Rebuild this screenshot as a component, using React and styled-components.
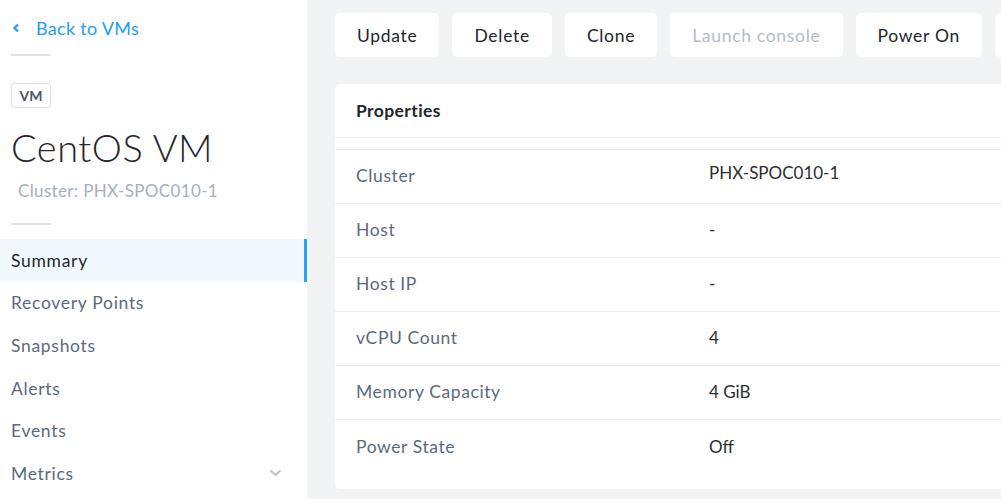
import styled, { createGlobalStyle } from "styled-components";

const GlobalStyle = createGlobalStyle`
  html, body {
    margin: 0;
    padding: 0;
    background: #f2f3f5;
  }
  * {
    box-sizing: border-box;
  }
`;

const actions = [
  { label: "Update" },
  { label: "Delete" },
  { label: "Clone" },
  { label: "Launch console", disabled: true },
  { label: "Power On" },
  { label: "Power Off" },
];

const properties = [
  { name: "Cluster", value: "PHX-SPOC010-1", raised: true },
  { name: "Host", value: "-" },
  { name: "Host IP", value: "-" },
  { name: "vCPU Count", value: "4" },
  { name: "Memory Capacity", value: "4 GiB" },
  { name: "Power State", value: "Off" },
];

const navItems = [
  { label: "Summary", active: true },
  { label: "Recovery Points" },
  { label: "Snapshots" },
  { label: "Alerts" },
  { label: "Events" },
  { label: "Metrics", expandable: true },
];

export default function App() {
  return (
    <>
      <GlobalStyle />
      <Page>
        <Sidebar>
          <BackLink>
            <svg width="9" height="10" viewBox="0 0 9 10">
              <polyline
                points="6,1.5 2.5,5 6,8.5"
                fill="none"
                stroke="#22a0f0"
                strokeWidth="2.4"
              />
            </svg>
            <span>Back to VMs</span>
          </BackLink>
          <ShortRule />
          <Badge>VM</Badge>
          <Title>CentOS VM</Title>
          <Subtitle>Cluster: PHX-SPOC010-1</Subtitle>
          <ShortRule $gap="22px" />
          <Nav>
            {navItems.map((item) => (
              <NavItem key={item.label} $active={item.active}>
                <span>{item.label}</span>
                {item.expandable && (
                  <svg width="13" height="8" viewBox="0 0 13 8">
                    <polyline
                      points="1.5,1.5 6.5,6 11.5,1.5"
                      fill="none"
                      stroke="#b8c1cd"
                      strokeWidth="2"
                    />
                  </svg>
                )}
              </NavItem>
            ))}
          </Nav>
        </Sidebar>

        <Main>
          <Toolbar>
            {actions.map((action) => (
              <ActionButton key={action.label} $disabled={action.disabled}>
                {action.label}
              </ActionButton>
            ))}
          </Toolbar>

          <Card>
            <CardHeader>Properties</CardHeader>
            <HeadSpacer />
            {properties.map((prop) => (
              <Row key={prop.name}>
                <Label>{prop.name}</Label>
                <Value $raised={prop.raised}>{prop.value}</Value>
              </Row>
            ))}
          </Card>
        </Main>
      </Page>
    </>
  );
}

const Page = styled.div`
  display: flex;
  height: 100vh;
  overflow: hidden;
  font-family: Lato, "Open Sans", sans-serif;
`;

const Sidebar = styled.aside`
  width: 307px;
  flex-shrink: 0;
  background: #ffffff;
  display: flex;
  flex-direction: column;
  align-items: flex-start;
`;

const BackLink = styled.a`
  display: flex;
  align-items: center;
  gap: 15px;
  height: 22px;
  margin: 17px 0 0 12px;
  color: #22a0f0;
  font-size: 18px;
  letter-spacing: 0.3px;
  cursor: pointer;
`;

const ShortRule = styled.div`
  flex-shrink: 0;
  width: 40px;
  height: 2px;
  background: #dfe3e8;
  margin: ${(p) => p.$gap || "15px"} 0 0 11px;
`;

const Badge = styled.span`
  flex-shrink: 0;
  margin: 27px 0 0 11px;
  height: 25px;
  width: 40px;
  display: flex;
  align-items: center;
  justify-content: center;
  border: 1px solid #dde1e7;
  border-radius: 3px;
  color: #4d5869;
  font-size: 14px;
  line-height: 14px;
  font-weight: 700;
`;

const Title = styled.h1`
  margin: 17px 0 0 11px;
  font-size: 38px;
  line-height: 44px;
  font-weight: 300;
  letter-spacing: 0.5px;
  color: #23272c;
`;

const Subtitle = styled.div`
  margin: 12px 0 0 18px;
  font-size: 17px;
  line-height: 20px;
  letter-spacing: 0.35px;
  color: #a5b0c0;
`;

const Nav = styled.nav`
  margin-top: 14px;
  width: 100%;
  display: flex;
  flex-direction: column;
`;

const NavItem = styled.div`
  height: 42.6px;
  padding: 0 25px 0 11px;
  display: flex;
  align-items: center;
  justify-content: space-between;
  font-size: 17.5px;
  letter-spacing: 0.7px;
  color: ${(p) => (p.$active ? "#22272d" : "#5b6a7e")};
  background: ${(p) => (p.$active ? "#f2f9fe" : "transparent")};
  box-shadow: ${(p) => (p.$active ? "inset -3px 0 0 #22a5f7" : "none")};
`;

const Main = styled.main`
  flex: 1;
  min-width: 0;
  padding: 13px 0 0 28px;
  overflow: hidden;
  background: #f2f3f5;
`;

const Toolbar = styled.div`
  display: flex;
  gap: 13px;
`;

const ActionButton = styled.button`
  flex-shrink: 0;
  height: 44px;
  padding: 0 22px;
  border: none;
  border-radius: 5px;
  background: #ffffff;
  font-family: inherit;
  font-size: 17.5px;
  letter-spacing: 0.7px;
  color: ${(p) => (p.$disabled ? "#b3bcc8" : "#22272d")};
  cursor: ${(p) => (p.$disabled ? "default" : "pointer")};
`;

const Card = styled.section`
  margin-top: 27px;
  width: 800px;
  background: #ffffff;
  border-radius: 5px;
  padding-bottom: 15px;
`;

const CardHeader = styled.h2`
  margin: 0;
  height: 54px;
  padding: 0 0 1px 21px;
  display: flex;
  align-items: center;
  font-size: 17.5px;
  font-weight: 700;
  letter-spacing: 0.4px;
  color: #22272d;
  border-bottom: 1px solid #eceef1;
`;

const HeadSpacer = styled.div`
  height: 12px;
  border-bottom: 1px solid #eceef1;
`;

const Row = styled.div`
  height: 54px;
  display: flex;
  align-items: center;
  padding: 0 0 2px 21px;
  border-bottom: 1px solid #eceef1;

  &:last-child {
    border-bottom: none;
  }
`;

const Label = styled.div`
  width: 353px;
  font-size: 17.5px;
  letter-spacing: 0.6px;
  color: #5b6a7e;
`;

const Value = styled.div`
  font-size: 17px;
  color: #2a2e33;
  margin-top: ${(p) => (p.$raised ? "-7px" : "0")};
`;
